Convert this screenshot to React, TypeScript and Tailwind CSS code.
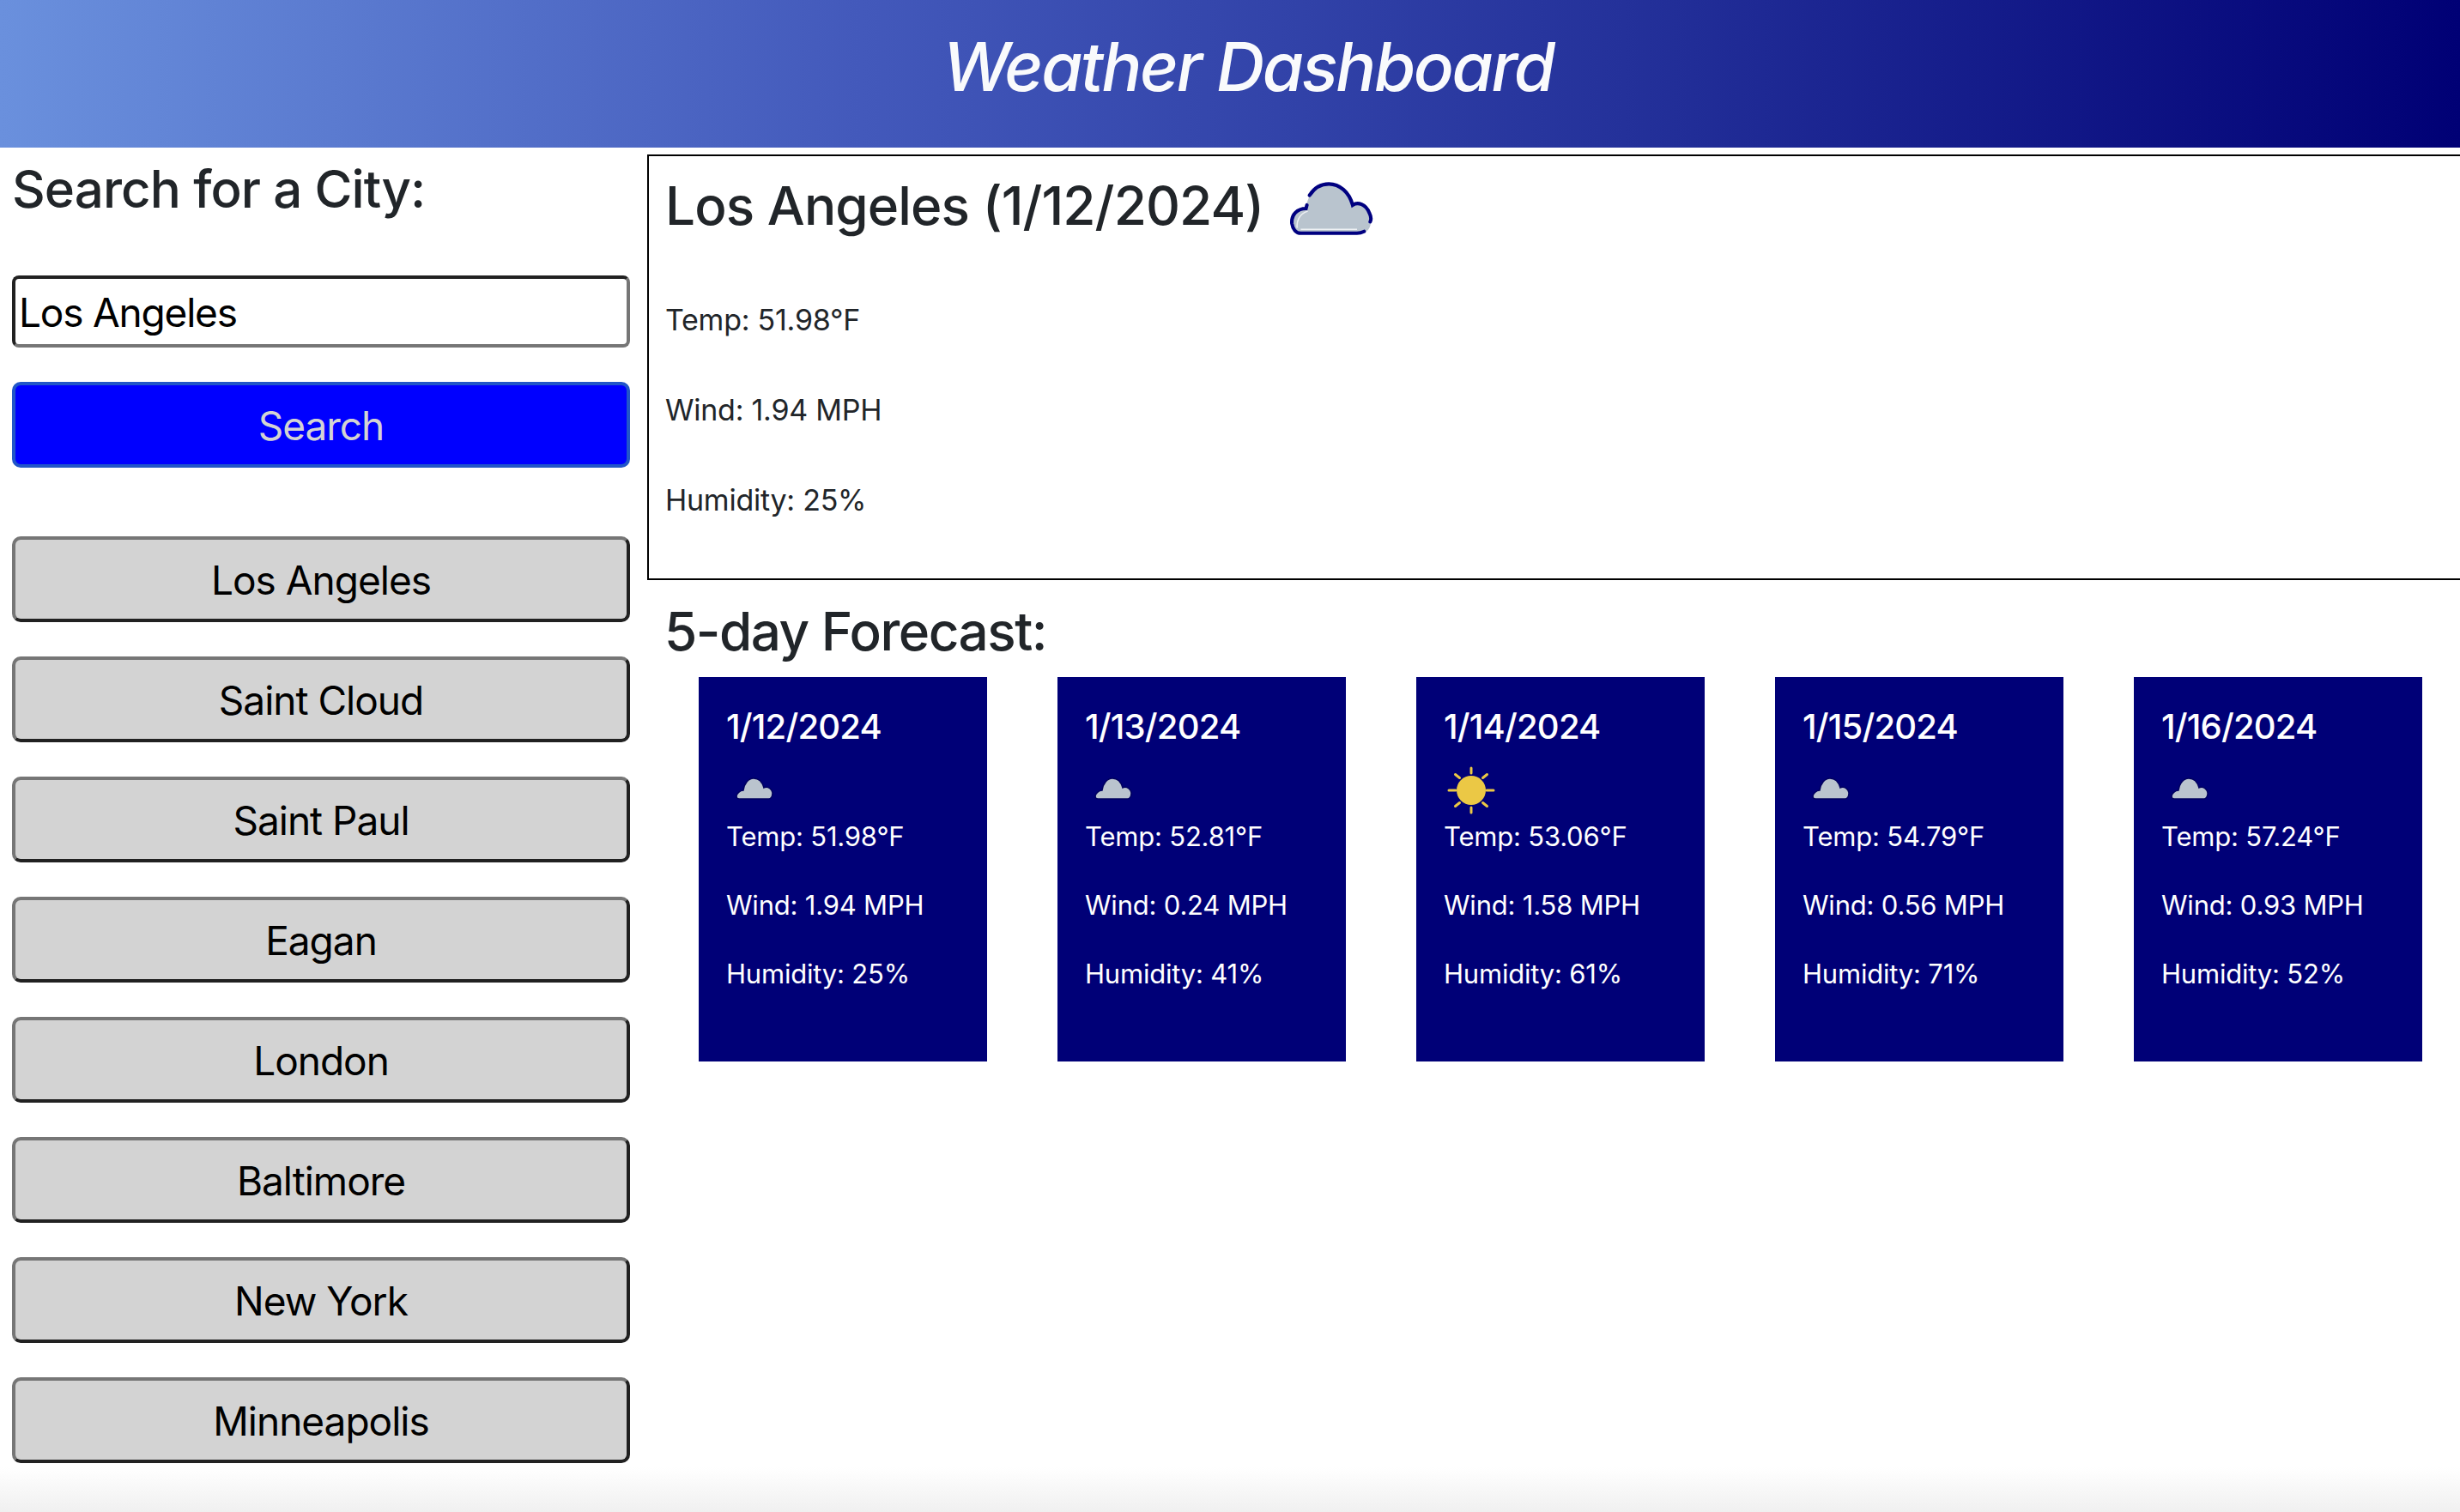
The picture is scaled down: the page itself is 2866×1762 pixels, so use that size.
const cities = ['Los Angeles', 'Saint Cloud', 'Saint Paul', 'Eagan', 'London', 'Baltimore', 'New York', 'Minneapolis'];

const forecast = [
  { date: '1/12/2024', icon: 'cloud', temp: '51.98', wind: '1.94', humidity: '25' },
  { date: '1/13/2024', icon: 'cloud', temp: '52.81', wind: '0.24', humidity: '41' },
  { date: '1/14/2024', icon: 'sun', temp: '53.06', wind: '1.58', humidity: '61' },
  { date: '1/15/2024', icon: 'cloud', temp: '54.79', wind: '0.56', humidity: '71' },
  { date: '1/16/2024', icon: 'cloud', temp: '57.24', wind: '0.93', humidity: '52' },
];

const BigCloud = () => (
  <svg viewBox="20 15 120 75" className="w-[123px] h-[77px] ml-[27px] mt-[2px] shrink-0">
    <path
      d="M36 83 H104 C116 83 118 68 114 60 C110 50 101 47 95 51 C91 36 80 27 68 27 C56 27 45 36 42 53 C32 55 25 62 26 72 C27 79 31 83 36 83 Z"
      fill="#b9c4ce"
    />
    <path
      d="M32 77 C31 70 34 61 44 58 M36 78.5 H100"
      fill="none"
      stroke="#eef1f4"
      strokeWidth="1.5"
    />
    <path
      d="M108 81 C104 83 102 83 100 83 H36 C31 83 27 79 26 72 C25 62 32 55 42 55 L43 51"
      fill="none"
      stroke="#000080"
      strokeWidth="4"
      strokeLinecap="round"
    />
    <path
      d="M46 40 C51 32 59 27 68 27 C80 27 91 36 95 51 C101 47 110 50 114 60 C116 64 116 68 115 70"
      fill="none"
      stroke="#000080"
      strokeWidth="4"
      strokeLinecap="round"
    />
  </svg>
);

const SmallCloud = () => (
  <svg viewBox="0 0 64 64" className="w-16 h-16 mt-[17px]">
    <path
      d="M15 42 H49 C54 42 55 35 53 32 C51 29 47 27 44 29 C42 22 38 18 32 18 C26 18 21 24 20 32 C16 32 12 36 12 39 C12 41 13 42 15 42 Z"
      fill="#bac4ce"
      stroke="#00005e"
      strokeWidth="1.5"
    />
  </svg>
);

const Sun = () => (
  <svg viewBox="0 0 64 64" className="w-16 h-16 mt-[17px]">
    <circle cx="32" cy="32" r="17" fill="#ebc845" />
    <g stroke="#ebc845" strokeWidth="3" strokeLinecap="round">
      <path d="M32 6 V12 M32 52 V58 M6 32 H14 M50 32 H58 M13.5 13.5 L18.5 17.5 M50.5 13.5 L45.5 17.5 M13.5 50.5 L18.5 46.5 M50.5 50.5 L45.5 46.5" />
    </g>
  </svg>
);

export default function App() {
  return (
    <div className="relative h-[1762px] overflow-hidden bg-white text-[#212529] font-['Inter','Liberation_Sans',sans-serif]">
      <header className="h-[172px] flex items-center justify-center pl-[42px] pb-[16px] bg-[linear-gradient(to_right,#6a90dd,#4359bb_35%,#24319a_66%,#000075)]">
        <h1 className="text-[78px] leading-none font-medium italic tracking-[-2.4px] text-[#f9fafc]">Weather Dashboard</h1>
      </header>

      <div className="flex">
        <aside className="w-[754px] shrink-0 pl-[14px]">
          <h2 className="mt-[12px] text-[60px] leading-[72px] font-medium tracking-[-0.9px]">Search for a City:</h2>
          <input
            readOnly
            value="Los Angeles"
            className="mt-[65px] block w-[720px] h-[84px] pl-[4px] pt-[2px] text-[46px] tracking-[-1.2px] text-black bg-white rounded-[8px] border-4 border-t-[#212121] border-l-[#212121] border-r-[#767676] border-b-[#767676]"
          />
          <button className="mt-[40px] block w-[720px] h-[100px] pt-[2px] text-[46px] tracking-[-1px] text-[#d3d3d3] bg-[#0000ff] rounded-[10px] border-4 border-[#2156c8]">
            Search
          </button>
          <div className="mt-[80px] flex flex-col gap-[40px]">
            {cities.map((city) => (
              <button
                key={city}
                className="block w-[720px] h-[100px] pt-[2px] text-[46px] tracking-[-1px] text-black bg-[#d3d3d3] rounded-[10px] border-4 border-t-[#767676] border-l-[#767676] border-r-[#212121] border-b-[#212121]"
              >
                {city}
              </button>
            ))}
          </div>
        </aside>

        <main className="flex-1 min-w-0 pt-[8px]">
          <section className="h-[496px] border-2 border-r-0 border-black pl-[19px]">
            <div className="flex items-center pt-[18px]">
              <h2 className="text-[62px] leading-[76px] font-medium tracking-[-0.9px]">Los Angeles (1/12/2024)</h2>
              <BigCloud />
            </div>
            <div className="mt-[76px] flex flex-col gap-[69px] text-[34px] leading-[36px] tracking-[-0.25px]">
              <p>Temp: 51.98°F</p>
              <p>Wind: 1.94 MPH</p>
              <p>Humidity: 25%</p>
            </div>
          </section>

          <h2 className="mt-[22px] ml-[20px] text-[62px] leading-[76px] font-medium tracking-[-1.5px]">5-day Forecast:</h2>

          <div className="mt-[15px] ml-[60px] w-[2008px] flex justify-between">
            {forecast.map((day) => (
              <div key={day.date} className="w-[336px] h-[448px] bg-[#000077] text-white px-[32px] pt-[33px]">
                <h4 className="text-[40px] leading-[50px] font-medium tracking-[-0.8px]">{day.date}</h4>
                {day.icon === 'sun' ? <Sun /> : <SmallCloud />}
                <div className="mt-[4px] flex flex-col gap-[44px] text-[31px] leading-[36px] tracking-[-0.2px]">
                  <p>Temp: {day.temp}°F</p>
                  <p>Wind: {day.wind} MPH</p>
                  <p>Humidity: {day.humidity}%</p>
                </div>
              </div>
            ))}
          </div>
        </main>
      </div>

      <div className="absolute inset-x-0 bottom-0 h-[52px] bg-gradient-to-b from-white to-[#f0f0f0]" />
    </div>
  );
}
